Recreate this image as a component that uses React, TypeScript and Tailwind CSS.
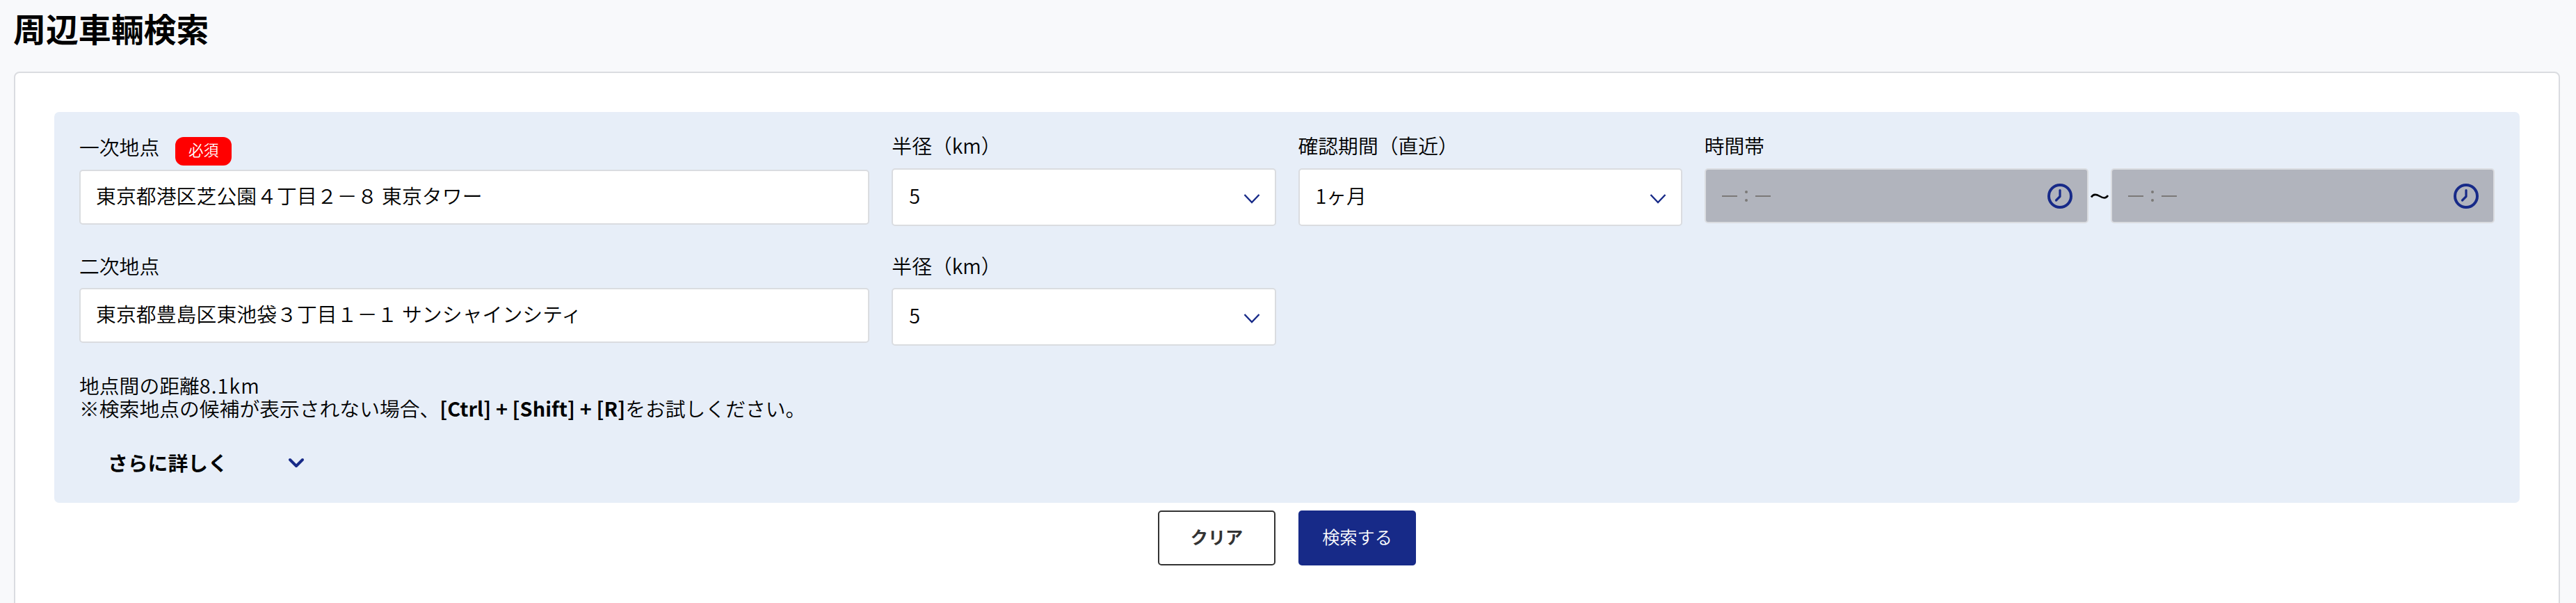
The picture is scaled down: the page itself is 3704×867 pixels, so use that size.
import type { ReactNode } from 'react';

function Label({ children }: { children: ReactNode }) {
  return <span className="block h-7 whitespace-nowrap leading-6">{children}</span>;
}

function Chevron({ className, strokeWidth }: { className: string; strokeWidth: number }) {
  return (
    <svg
      viewBox="0 0 24 16"
      className={className}
      fill="none"
      stroke="#172a88"
      strokeWidth={strokeWidth}
      strokeLinecap={strokeWidth > 3 ? 'round' : 'butt'}
      strokeLinejoin={strokeWidth > 3 ? 'round' : 'miter'}
    >
      <path d={strokeWidth > 3 ? 'M3 3 12 12 21 3' : 'M1.5 2 12 13 22.5 2'} />
    </svg>
  );
}

function TextBox({ value }: { value: string }) {
  return (
    <div className="flex h-[79px] items-center rounded-[5px] border-2 border-[#dadce0] bg-white pr-6 pb-1.5 pl-[22px] tracking-[0.1px] whitespace-nowrap">
      {value}
    </div>
  );
}

function SelectBox({ value }: { value: string }) {
  return (
    <div className="flex h-[83px] items-center justify-between rounded-[5px] border-2 border-[#dadce0] bg-white pr-[21px] pl-[23px]">
      <span className="pb-1.5">{value}</span>
      <Chevron className="mt-1 h-4 w-6" strokeWidth={2.4} />
    </div>
  );
}

function TimeBox() {
  return (
    <div className="flex h-[79px] items-center justify-between rounded-[5px] border-2 border-[#dadce0] bg-[#b1b4bd] pr-[21px] pl-[23px] text-[#7b7977]">
      <div className="flex items-center gap-[11px]">
        <span className="h-0.5 w-[22px] bg-current" />
        <span className="flex flex-col gap-2">
          <span className="size-1 rounded-full bg-current" />
          <span className="size-1 rounded-full bg-current" />
        </span>
        <span className="h-0.5 w-[22px] bg-current" />
      </div>
      <svg viewBox="0 0 36 36" className="size-9" fill="none" stroke="#172a88" strokeLinecap="round">
        <circle cx="18" cy="18" r="16" strokeWidth="4" />
        <path d="M18 9.5v9l-5.5 5.5" strokeWidth="3.2" strokeLinejoin="round" />
      </svg>
    </div>
  );
}

function SelectField({ label, value }: { label: string; value: string }) {
  return (
    <div>
      <Label>{label}</Label>
      <div className="mt-[17px]">
        <SelectBox value={value} />
      </div>
    </div>
  );
}

export default function App() {
  return (
    <main
      lang="ja"
      className="h-[867px] overflow-hidden bg-[#f8f9fb] pl-5 pr-[23px] font-['Noto_Sans_CJK_JP',sans-serif] text-[28.8px] leading-7 font-[350] text-black"
    >
      <h1 className="-ml-px h-[103px] pt-4 text-[46.9px] leading-[48px] font-bold">周辺車輛検索</h1>

      <section className="h-[800px] rounded-lg border-2 border-[#dadce0] bg-white px-14 pt-14">
        <div className="h-[562px] rounded-[7px] bg-[#e7eef8] px-9 pt-9">
          <div className="grid grid-cols-6 gap-x-8">
            <div className="col-span-2">
              <div className="flex h-[47px] items-start">
                <span className="mt-0.5">
                  <Label>一次地点</Label>
                </span>
                <span className="ml-[23px] flex h-[41px] w-[81px] items-center justify-center rounded-xl bg-[#f00] pb-1.5 text-[21.6px] text-white">
                  必須
                </span>
              </div>
              <TextBox value="東京都港区芝公園４丁目２－８ 東京タワー" />
            </div>
            <SelectField label="半径（km）" value="5" />
            <SelectField label="確認期間（直近）" value="1ヶ月" />
            <div className="col-span-2">
              <Label>時間帯</Label>
              <div className="relative mt-[17px] grid grid-cols-2 gap-x-8">
                <TimeBox />
                <TimeBox />
                <svg
                  viewBox="0 0 32 12"
                  className="absolute top-[34px] left-[calc(50%-16px)] h-3 w-8"
                  fill="none"
                  stroke="black"
                  strokeWidth="2.6"
                >
                  <path d="M4 7.5C7 2.5 11 3 16 6S25 10 28 5" />
                </svg>
              </div>
            </div>
          </div>

          <div className="mt-[45px] grid grid-cols-6 gap-x-8">
            <div className="col-span-2">
              <Label>二次地点</Label>
              <div className="mt-4">
                <TextBox value="東京都豊島区東池袋３丁目１－１ サンシャインシティ" />
              </div>
            </div>
            <div>
              <Label>半径（km）</Label>
              <div className="mt-4">
                <SelectBox value="5" />
              </div>
            </div>
          </div>

          <div className="mt-10 leading-[33px] whitespace-nowrap">
            <p>
              地点間の距離<span className="tracking-[1.1px]">8.1km</span>
            </p>
            <p>
              ※検索地点の候補が表示されない場合、
              <b className="tracking-[0.1px]">[Ctrl] + [Shift] + [R]</b>
              をお試しください。
            </p>
          </div>

          <div className="mt-12 flex items-center pl-[41px] font-bold">
            <span className="w-[259px]">さらに詳しく</span>
            <Chevron className="mt-0.5 h-4 w-6" strokeWidth={4} />
          </div>
        </div>

        <div className="mt-[11px] ml-[1587px] flex gap-[33px] text-[25.2px]">
          <button className="h-[79px] w-[169px] rounded-[5px] border-2 border-[#333] bg-white pb-1.5 font-bold text-[#333]">
            クリア
          </button>
          <button className="h-[79px] w-[169px] rounded-[5px] bg-[#172a88] pb-1.5 text-white">検索する</button>
        </div>
      </section>
    </main>
  );
}
